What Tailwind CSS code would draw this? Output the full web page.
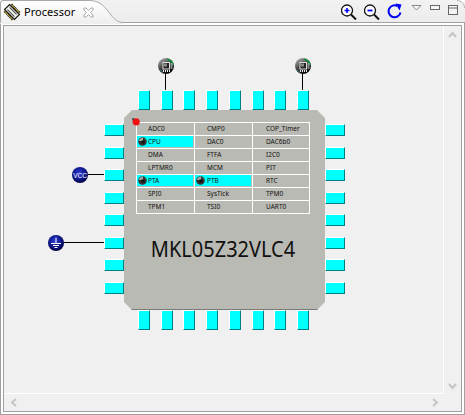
<!DOCTYPE html>
<html>
<head>
<script src="https://cdn.jsdelivr.net/npm/@tailwindcss/browser@4"></script>
</head>
<body class="m-0 bg-[#f0f0f0] font-['Noto_Sans','Liberation_Sans',sans-serif]">
<svg width="0" height="0" class="absolute">
  <defs>
    <linearGradient id="ic" x1="0" y1="0" x2="0.6" y2="1"><stop offset="0" stop-color="#c0c0c0"/><stop offset="0.5" stop-color="#505050"/><stop offset="1" stop-color="#000"/></linearGradient>
    <radialGradient id="blue" cx="0.45" cy="0.4" r="0.6"><stop offset="0" stop-color="#3040d8"/><stop offset="0.6" stop-color="#101a90"/><stop offset="1" stop-color="#000040"/></radialGradient>
    <symbol id="icon-ic" viewBox="0 0 16 16">
      <circle cx="8" cy="8" r="8" fill="url(#ic)"/>
      <path d="M9 1.200A7 7 0 0 1 15 7" fill="none" stroke="#0a9a3a" stroke-width="1.500"/>
      <path d="M2 12A7 7 0 0 0 5 14.500" fill="none" stroke="#207a80" stroke-width="1"/>
      <rect x="5" y="4.500" width="6.500" height="6.500" fill="#222" stroke="#ddd" stroke-width="1"/>
      <rect x="6" y="5.500" width="3" height="3" fill="#888"/>
      <path d="M5.500 12v2M7.500 12v2M9.500 12v2M11.500 12v2M12.500 6h2M12.500 8h2M12.500 10h2" stroke="#eee" stroke-width="1"/>
    </symbol>
    <symbol id="icon-cell" viewBox="0 0 9 9">
      <circle cx="4.500" cy="4.500" r="4.300" fill="#333"/>
      <path d="M1.500 2.500A4 4 0 0 1 5 .6V4H1z" fill="#a8a8a0"/>
      <rect x="3.500" y="3.500" width="3" height="3" fill="#111"/>
      <path d="M6.500 1.200A4 4 0 0 1 8.300 3.500" fill="none" stroke="#2f9a6a" stroke-width="1"/>
    </symbol>
  </defs>
</svg>
<div class="w-[465px] h-[415px] flex flex-col overflow-hidden relative bg-[#f0f0f0]">
  <!-- tab bar -->
  <div class="h-[23px] flex items-start relative bg-gradient-to-b from-[#f2f2f2] to-[#ececec] border-b border-[#a0a0a0]">
    <svg class="absolute left-0 top-0" width="124" height="24" viewBox="0 0 124 24"><defs><linearGradient id="tab" x1="0" y1="0" x2="0" y2="1"><stop offset="0" stop-color="#fff"/><stop offset="1" stop-color="#eeeeee"/></linearGradient></defs><path d="M0 24V3Q0 .5 3 .5H90C100 .5 106 8 111 15C115 20 118 22.500 124 22.500V24Z" fill="url(#tab)"/><path d="M.5 23V3Q.5 .5 3 .5H90C100 .5 106 8 111 15C115 20 118 22.500 124 22.500" fill="none" stroke="#a8a8a8"/></svg>
    <svg class="absolute right-0 top-0" width="8" height="8" viewBox="0 0 8 8"><path d="M0 .5C4 .5 7.500 3 7.500 8V0H0z" fill="#fff"/><path d="M0 .5C4 .5 7.500 3 7.500 8" fill="none" stroke="#b0b0b0"/></svg>
    <svg class="relative ml-[3px] mt-[3px] shrink-0" width="18" height="18" viewBox="0 0 18 18"><g transform="rotate(45 9 9)"><path d="M4 3v12M6.500 3v12M9 3v12M11.500 3v12M14 3v12" stroke="#111" stroke-width="1.800"/><path d="M4 3.500v11M6.500 3.500v11M9 3.500v11M11.500 3.500v11M14 3.500v11" stroke="#d0aa00" stroke-width="1.200"/><rect x="2" y="5.500" width="14" height="7" fill="#f4f4ee" stroke="#111" stroke-width="1.200"/><path d="M4 7.500h10M4 10.500h10" stroke="#444"/></g></svg>
    <span class="relative ml-[3px] mt-[3px] text-[11px] leading-[17px] tracking-[0.05px] text-black">Processor</span>
    <svg class="relative ml-[8px] mt-[7px]" width="11" height="11" viewBox="0 0 11 11"><path d="M1 1h2l2.500 2.500L8 1h2v2L7.500 5.500 10 8v2H8L5.500 7.500 3 10H1V8l2.500-2.500L1 3z" fill="#fff" stroke="#a8a8a8"/></svg>
    <div class="ml-auto relative flex items-start pt-[4px] pr-[6px] gap-[7px]">
      <svg width="16" height="16" viewBox="0 0 16 16"><circle cx="6" cy="6.500" r="5.500" fill="#fff" stroke="#111" stroke-width="1.300"/><path d="M10 10.500l5 5" stroke="#111" stroke-width="2"/><path d="M3.500 6.500h5M6 4v5" stroke="#00f" stroke-width="1.600"/></svg>
      <svg width="16" height="16" viewBox="0 0 16 16"><circle cx="6" cy="6.500" r="5.500" fill="#fff" stroke="#111" stroke-width="1.300"/><path d="M10 10.500l5 5" stroke="#111" stroke-width="2"/><path d="M3.500 6.500h5" stroke="#00f" stroke-width="1.800"/></svg>
      <svg class="-mt-[1px]" width="16" height="16" viewBox="0 0 16 16"><path d="M13.500 9.500A6 6 0 1 1 10.500 3" fill="none" stroke="#0000f0" stroke-width="2"/><path d="M8.500 0.500l6 1-2 6z" fill="#0000f0"/></svg>
      <svg class="ml-[1px] mt-[1px]" width="11" height="6" viewBox="0 0 11 6"><path d="M1 .5h9L5.500 5z" fill="#f4f4f4" stroke="#8a8a8a"/></svg>
      <svg class="ml-[1px] mt-[1px]" width="11" height="6" viewBox="0 0 11 6"><rect x=".5" y=".5" width="9" height="4" fill="#f4f4f4" stroke="#666"/></svg>
      <svg class="mt-[1px]" width="11" height="11" viewBox="0 0 11 11"><rect x=".5" y=".5" width="9" height="9" fill="#f4f4f4" stroke="#666"/><path d="M1 3h8" stroke="#666"/></svg>
    </div>
  </div>
  <!-- panel -->
  <div class="flex-1 flex flex-col border-x border-b border-[#a0a0a0] p-[2px] bg-white">
    <div class="flex-1 flex flex-col border border-[#a0a0a0] bg-[#f0f0f0]">
      <div class="flex-1 flex min-h-0">
        <div class="flex-1 relative border-r border-b border-white">

          <!-- external connections -->
          <svg class="absolute left-[154px] top-[32px]" width="16" height="16"><use href="#icon-ic"/></svg>
          <div class="absolute left-[161px] top-[48px] w-[1px] h-[16px] bg-black"></div>
          <svg class="absolute left-[291px] top-[32px]" width="16" height="16"><use href="#icon-ic"/></svg>
          <div class="absolute left-[298px] top-[48px] w-[1px] h-[16px] bg-black"></div>
          <svg class="absolute left-[68px] top-[141px]" width="16" height="16" viewBox="0 0 16 16"><circle cx="8" cy="8" r="8" fill="url(#blue)"/><text x="8" y="10.500" text-anchor="middle" font-size="6.500" fill="#fff" font-family="Liberation Sans">VCC</text></svg>
          <div class="absolute left-[84px] top-[148px] w-[16px] h-[1px] bg-black"></div>
          <svg class="absolute left-[44px] top-[209px]" width="16" height="16" viewBox="0 0 16 16"><circle cx="8" cy="8" r="8" fill="url(#blue)"/><path d="M8 2.500v6M3 8.500h10M5 10.500h6M6.500 12.500h3" stroke="#fff" stroke-width="1"/></svg>
          <div class="absolute left-[60px] top-[216px] w-[40px] h-[1px] bg-black"></div>

          <!-- chip -->
          <div class="absolute left-[100px] top-[64px] grid grid-cols-[20px_201px_20px] grid-rows-[20px_200px_20px]">
            <div></div>
            <div class="flex justify-between pl-[14px] pr-[16px]">
              <div class="w-[12px] h-[20px] bg-[#00ffff] border border-l-white border-t-white border-r-[#008080] border-b-[#008080]"></div>
              <div class="w-[12px] h-[20px] bg-[#00ffff] border border-l-white border-t-white border-r-[#008080] border-b-[#008080]"></div>
              <div class="w-[12px] h-[20px] bg-[#00ffff] border border-l-white border-t-white border-r-[#008080] border-b-[#008080]"></div>
              <div class="w-[12px] h-[20px] bg-[#00ffff] border border-l-white border-t-white border-r-[#008080] border-b-[#008080]"></div>
              <div class="w-[12px] h-[20px] bg-[#00ffff] border border-l-white border-t-white border-r-[#008080] border-b-[#008080]"></div>
              <div class="w-[12px] h-[20px] bg-[#00ffff] border border-l-white border-t-white border-r-[#008080] border-b-[#008080]"></div>
              <div class="w-[12px] h-[20px] bg-[#00ffff] border border-l-white border-t-white border-r-[#008080] border-b-[#008080]"></div>
              <div class="w-[12px] h-[20px] bg-[#00ffff] border border-l-white border-t-white border-r-[#008080] border-b-[#008080]"></div>
            </div>
            <div></div>

            <div class="flex flex-col justify-between pt-[14px] pb-[16px]">
              <div class="w-[20px] h-[12px] bg-[#00ffff] border border-l-white border-t-white border-r-[#008080] border-b-[#008080]"></div>
              <div class="w-[20px] h-[12px] bg-[#00ffff] border border-l-white border-t-white border-r-[#008080] border-b-[#008080]"></div>
              <div class="w-[20px] h-[12px] bg-[#00ffff] border border-l-white border-t-white border-r-[#008080] border-b-[#008080]"></div>
              <div class="w-[20px] h-[12px] bg-[#00ffff] border border-l-white border-t-white border-r-[#008080] border-b-[#008080]"></div>
              <div class="w-[20px] h-[12px] bg-[#00ffff] border border-l-white border-t-white border-r-[#008080] border-b-[#008080]"></div>
              <div class="w-[20px] h-[12px] bg-[#00ffff] border border-l-white border-t-white border-r-[#008080] border-b-[#008080]"></div>
              <div class="w-[20px] h-[12px] bg-[#00ffff] border border-l-white border-t-white border-r-[#008080] border-b-[#008080]"></div>
              <div class="w-[20px] h-[12px] bg-[#00ffff] border border-l-white border-t-white border-r-[#008080] border-b-[#008080]"></div>
            </div>

            <!-- body -->
            <div class="relative bg-[#b9bab3] border-b border-[#7a7a7a] pl-[12px] pt-[12px] [clip-path:polygon(8px_0,calc(100%-8px)_0,100%_8px,100%_calc(100%-8px),calc(100%-8px)_100%,8px_100%,0_calc(100%-8px),0_8px)]">
              <div class="w-[174px] grid grid-cols-[57px_57px_56px] auto-rows-[12px] gap-[1px] p-[1px] bg-white text-[6.500px] leading-[11px] text-[#111]">
                <div class="bg-[#b9bab3] pl-[11px]">ADC0</div>
                <div class="bg-[#b9bab3] pl-[12px]">CMP0</div>
                <div class="bg-[#b9bab3] pl-[13px]">COP_Timer</div>

                <div class="bg-[#00ffff] border-b border-r border-[#b9bab3] flex items-center"><svg class="shrink-0 ml-[1px]" width="9" height="9"><use href="#icon-cell"/></svg><span class="ml-[1px]">CPU</span></div>
                <div class="bg-[#b9bab3] pl-[12px]">DAC0</div>
                <div class="bg-[#b9bab3] pl-[13px]">DAC6b0</div>

                <div class="bg-[#b9bab3] pl-[11px]">DMA</div>
                <div class="bg-[#b9bab3] pl-[12px]">FTFA</div>
                <div class="bg-[#b9bab3] pl-[13px]">I2C0</div>

                <div class="bg-[#b9bab3] pl-[11px]">LPTMR0</div>
                <div class="bg-[#b9bab3] pl-[12px]">MCM</div>
                <div class="bg-[#b9bab3] pl-[13px]">PIT</div>

                <div class="bg-[#00ffff] border-b border-r border-[#b9bab3] flex items-center"><svg class="shrink-0 ml-[1px]" width="9" height="9"><use href="#icon-cell"/></svg><span class="ml-[1px]">PTA</span></div>
                <div class="bg-[#00ffff] border-b border-r border-[#b9bab3] flex items-center"><svg class="shrink-0 ml-[1px]" width="9" height="9"><use href="#icon-cell"/></svg><span class="ml-[2px]">PTB</span></div>
                <div class="bg-[#b9bab3] pl-[13px]">RTC</div>

                <div class="bg-[#b9bab3] pl-[11px]">SPI0</div>
                <div class="bg-[#b9bab3] pl-[12px]">SysTick</div>
                <div class="bg-[#b9bab3] pl-[13px]">TPM0</div>

                <div class="bg-[#b9bab3] pl-[11px]">TPM1</div>
                <div class="bg-[#b9bab3] pl-[12px]">TSI0</div>
                <div class="bg-[#b9bab3] pl-[13px]">UART0</div>
              </div>
              <div class="mt-[21px] w-full text-center pr-[15px] text-[20px] leading-[27px] text-[#111] scale-y-110">MKL05Z32VLC4</div>
              <svg class="absolute left-[8px] top-[8px]" width="8" height="8" viewBox="0 0 8 8"><circle cx="4.200" cy="3.800" r="3.600" fill="#f01010"/><path d="M0 0h2.500L2 2 0 2.500z" fill="#333" opacity=".7"/></svg>
            </div>

            <div class="flex flex-col justify-between pt-[14px] pb-[16px]">
              <div class="w-[20px] h-[12px] bg-[#00ffff] border border-l-white border-t-white border-r-[#008080] border-b-[#008080]"></div>
              <div class="w-[20px] h-[12px] bg-[#00ffff] border border-l-white border-t-white border-r-[#008080] border-b-[#008080]"></div>
              <div class="w-[20px] h-[12px] bg-[#00ffff] border border-l-white border-t-white border-r-[#008080] border-b-[#008080]"></div>
              <div class="w-[20px] h-[12px] bg-[#00ffff] border border-l-white border-t-white border-r-[#008080] border-b-[#008080]"></div>
              <div class="w-[20px] h-[12px] bg-[#00ffff] border border-l-white border-t-white border-r-[#008080] border-b-[#008080]"></div>
              <div class="w-[20px] h-[12px] bg-[#00ffff] border border-l-white border-t-white border-r-[#008080] border-b-[#008080]"></div>
              <div class="w-[20px] h-[12px] bg-[#00ffff] border border-l-white border-t-white border-r-[#008080] border-b-[#008080]"></div>
              <div class="w-[20px] h-[12px] bg-[#00ffff] border border-l-white border-t-white border-r-[#008080] border-b-[#008080]"></div>
            </div>

            <div></div>
            <div class="flex justify-between pl-[14px] pr-[16px]">
              <div class="w-[12px] h-[20px] bg-[#00ffff] border border-l-white border-t-white border-r-[#008080] border-b-[#008080]"></div>
              <div class="w-[12px] h-[20px] bg-[#00ffff] border border-l-white border-t-white border-r-[#008080] border-b-[#008080]"></div>
              <div class="w-[12px] h-[20px] bg-[#00ffff] border border-l-white border-t-white border-r-[#008080] border-b-[#008080]"></div>
              <div class="w-[12px] h-[20px] bg-[#00ffff] border border-l-white border-t-white border-r-[#008080] border-b-[#008080]"></div>
              <div class="w-[12px] h-[20px] bg-[#00ffff] border border-l-white border-t-white border-r-[#008080] border-b-[#008080]"></div>
              <div class="w-[12px] h-[20px] bg-[#00ffff] border border-l-white border-t-white border-r-[#008080] border-b-[#008080]"></div>
              <div class="w-[12px] h-[20px] bg-[#00ffff] border border-l-white border-t-white border-r-[#008080] border-b-[#008080]"></div>
              <div class="w-[12px] h-[20px] bg-[#00ffff] border border-l-white border-t-white border-r-[#008080] border-b-[#008080]"></div>
            </div>
            <div></div>
          </div>
        </div>
        <!-- vertical scrollbar -->
        <div class="w-[17px] flex flex-col justify-between items-center pt-[5px] pb-[4px]">
          <svg width="9" height="7" viewBox="0 0 9 7"><path d="M1 6l3.500-4L8 6" fill="none" stroke="#c4c4c4" stroke-width="2"/></svg>
          <svg width="9" height="7" viewBox="0 0 9 7"><path d="M1 1l3.500 4L8 1" fill="none" stroke="#c4c4c4" stroke-width="2"/></svg>
        </div>
      </div>
      <!-- horizontal scrollbar -->
      <div class="h-[17px] flex justify-between items-center pl-[6px] pr-[22px]">
        <svg width="7" height="9" viewBox="0 0 7 9"><path d="M6 1L2 4.500 6 8" fill="none" stroke="#c4c4c4" stroke-width="2"/></svg>
        <svg width="7" height="9" viewBox="0 0 7 9"><path d="M1 1l4 3.500L1 8" fill="none" stroke="#c4c4c4" stroke-width="2"/></svg>
      </div>
    </div>
  </div>
</div>
</body>
</html>
